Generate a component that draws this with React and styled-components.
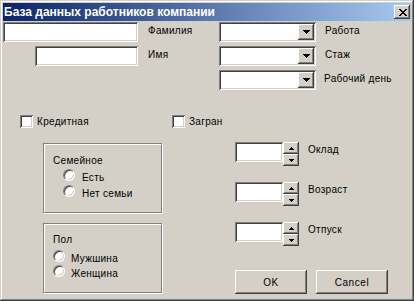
import React from 'react';
import styled, { createGlobalStyle, css } from 'styled-components';

const Global = createGlobalStyle`
  html, body { margin: 0; padding: 0; background: #d4d0c8; }
  body {
    width: 414px; height: 301px; overflow: hidden;
    font-family: "Liberation Sans", Arial, sans-serif;
    font-size: 10px; color: #000;
  }
  * { box-sizing: border-box; }
`;

const raised = css`
  background: #d4d0c8;
  box-shadow: inset -1px -1px #404040, inset 1px 1px #fff,
    inset -2px -2px #808080, inset 2px 2px #d4d0c8;
`;

const sunken = css`
  background: #fff;
  box-shadow: inset 1px 1px #808080, inset -1px -1px #fff,
    inset 2px 2px #404040, inset -2px -2px #d4d0c8;
`;

const Window = styled.div`
  width: 414px;
  height: 301px;
  padding: 3px;
  background: #d4d0c8;
  box-shadow: inset -1px -1px #404040, inset 1px 1px #d4d0c8,
    inset -2px -2px #808080, inset 2px 2px #fff;
  display: flex;
  flex-direction: column;
`;

const TitleBar = styled.div`
  height: 18px;
  flex: none;
  display: flex;
  align-items: center;
  justify-content: space-between;
  padding: 0 1px 0 1px;
  background: linear-gradient(to right, #0a246a, #a6caf0);
  color: #fff;
  font-weight: bold;
  font-size: 12px;
  white-space: nowrap;
`;

const TitleText = styled.span`
  line-height: 18px;
`;

const CloseButton = styled.div`
  width: 16px;
  height: 14px;
  ${raised};
  display: flex;
  align-items: center;
  justify-content: center;
  padding-left: 1px;
`;

const TopGrid = styled.div`
  margin-top: 1px;
  display: grid;
  grid-template-columns: 135px 81px 97px 1fr;
  grid-auto-rows: 20px;
  row-gap: 4px;
`;

const TextBox = styled.div`
  ${sunken};
  height: 20px;
  width: ${(p) => p.$w}px;
  justify-self: ${(p) => (p.$end ? 'end' : 'start')};
`;

const Label = styled.div`
  line-height: 13px;
  padding-top: 2px;
  padding-left: ${(p) => p.$pl || 0}px;
  letter-spacing: 0.3px;
  white-space: nowrap;
`;

const Combo = styled.div`
  ${sunken};
  height: 20px;
  width: 97px;
  padding: 2px;
  display: flex;
  justify-content: flex-end;
`;

const DropButton = styled.div`
  width: 16px;
  height: 16px;
  ${raised};
  display: flex;
  align-items: center;
  justify-content: center;
`;

const CheckRow = styled.div`
  margin-top: 25px;
  padding-left: 17px;
  display: grid;
  grid-template-columns: 152px 1fr;
`;

const CheckItem = styled.div`
  display: flex;
  align-items: center;
  gap: 4px;
  height: 13px;
`;

const CheckBox = styled.div`
  width: 13px;
  height: 13px;
  ${sunken};
`;

const CheckLabel = styled.span`
  letter-spacing: 0.3px;
  line-height: 13px;
  margin-top: -1px;
`;

const Lower = styled.div`
  margin-top: 14px;
  display: grid;
  grid-template-columns: 232px 1fr;
`;

const LeftCol = styled.div`
  padding: 1px 0 0 40px;
  display: flex;
  flex-direction: column;
  gap: 10px;
`;

const Group = styled.div`
  width: 119px;
  height: 70px;
  border: 1px solid #808080;
  box-shadow: inset 1px 1px #fff, 1px 1px 0 #fff;
  padding: ${(p) => p.$pt}px 0 0 9px;
`;

const GroupTitle = styled.div`
  line-height: 13px;
  letter-spacing: 0.3px;
`;

const RadioList = styled.div`
  margin-top: ${(p) => p.$mt}px;
  padding-left: ${(p) => p.$indent}px;
  display: flex;
  flex-direction: column;
`;

const RadioRow = styled.div`
  height: ${(p) => p.$h}px;
  display: flex;
  align-items: flex-start;
  gap: ${(p) => p.$gap}px;
`;

const RadioCircle = styled.div`
  margin-top: 2px;
  width: 12px;
  height: 12px;
  border-radius: 50%;
  background: #fff;
  border: 1px solid;
  border-color: #808080 #fff #fff #808080;
  box-shadow: inset 1px 1px #404040, inset -1px -1px #d4d0c8;
`;

const RadioLabel = styled.span`
  margin-top: 4px;
  line-height: 13px;
  letter-spacing: 0.3px;
  white-space: nowrap;
`;

const RightCol = styled.div`
  display: flex;
  flex-direction: column;
  gap: 16px;
`;

const SpinRow = styled.div`
  height: 24px;
  display: flex;
  align-items: flex-start;
`;

const SpinField = styled.div`
  ${sunken};
  width: 48px;
  height: 20px;
`;

const SpinButtons = styled.div`
  display: flex;
  flex-direction: column;
  width: 16px;
`;

const SpinButton = styled.div`
  height: 12px;
  ${raised};
  display: flex;
  align-items: center;
  justify-content: center;
`;

const SpinLabel = styled.span`
  margin-left: 9px;
  padding-top: 1px;
  line-height: 13px;
  letter-spacing: 0.3px;
`;

const ButtonRow = styled.div`
  margin-top: 8px;
  display: flex;
  gap: 9px;
`;

const PushButton = styled.div`
  width: 72px;
  height: 24px;
  ${raised};
  display: flex;
  align-items: center;
  justify-content: center;
  letter-spacing: 0.6px;
`;

const Px = ({ rows }) => (
  <svg width={rows[0].length} height={rows.length} shapeRendering="crispEdges" style={{ display: 'block' }}>
    {rows.flatMap((r, y) =>
      r.split('').map((c, x) => (c === '#' ? <rect key={`${x}-${y}`} x={x} y={y} width="1" height="1" fill="#000" /> : null))
    )}
  </svg>
);

const CLOSE = ['##....##', '.##..##.', '..####..', '...##...', '..####..', '.##..##.', '##....##'];
const DOWN = ['#######', '.#####.', '..###..', '...#...'];
const UP_S = ['..#..', '.###.', '#####'];
const DOWN_S = ['#####', '.###.', '..#..'];

const Spinner = ({ label }) => (
  <SpinRow>
    <SpinField />
    <SpinButtons>
      <SpinButton><Px rows={UP_S} /></SpinButton>
      <SpinButton><Px rows={DOWN_S} /></SpinButton>
    </SpinButtons>
    <SpinLabel>{label}</SpinLabel>
  </SpinRow>
);

const ComboBox = () => (
  <Combo>
    <DropButton><Px rows={DOWN} /></DropButton>
  </Combo>
);

export default function App() {
  return (
    <>
      <Global />
      <Window>
        <TitleBar>
          <TitleText>База данных работников компании</TitleText>
          <CloseButton><Px rows={CLOSE} /></CloseButton>
        </TitleBar>

        <TopGrid>
          <TextBox $w={135} />
          <Label $pl={10}>Фамилия</Label>
          <ComboBox />
          <Label $pl={9}>Работа</Label>

          <TextBox $w={103} $end />
          <Label $pl={10}>Имя</Label>
          <ComboBox />
          <Label $pl={9}>Стаж</Label>

          <div />
          <div />
          <ComboBox />
          <Label $pl={8}>Рабочий день</Label>
        </TopGrid>

        <CheckRow>
          <CheckItem><CheckBox /><CheckLabel>Кредитная</CheckLabel></CheckItem>
          <CheckItem><CheckBox /><CheckLabel>Загран</CheckLabel></CheckItem>
        </CheckRow>

        <Lower>
          <LeftCol>
            <Group $pt={10}>
              <GroupTitle>Семейное</GroupTitle>
              <RadioList $mt={0} $indent={10}>
                <RadioRow $h={16} $gap={7}><RadioCircle /><RadioLabel>Есть</RadioLabel></RadioRow>
                <RadioRow $h={16} $gap={7}><RadioCircle /><RadioLabel>Нет семьи</RadioLabel></RadioRow>
              </RadioList>
            </Group>
            <Group $pt={9}>
              <GroupTitle>Пол</GroupTitle>
              <RadioList $mt={2} $indent={0}>
                <RadioRow $h={15} $gap={6}><RadioCircle /><RadioLabel>Мужшина</RadioLabel></RadioRow>
                <RadioRow $h={15} $gap={6}><RadioCircle /><RadioLabel>Женщина</RadioLabel></RadioRow>
              </RadioList>
            </Group>
          </LeftCol>

          <RightCol>
            <Spinner label="Оклад" />
            <Spinner label="Возраст" />
            <Spinner label="Отпуск" />
            <ButtonRow>
              <PushButton>OK</PushButton>
              <PushButton>Cancel</PushButton>
            </ButtonRow>
          </RightCol>
        </Lower>
      </Window>
    </>
  );
}
